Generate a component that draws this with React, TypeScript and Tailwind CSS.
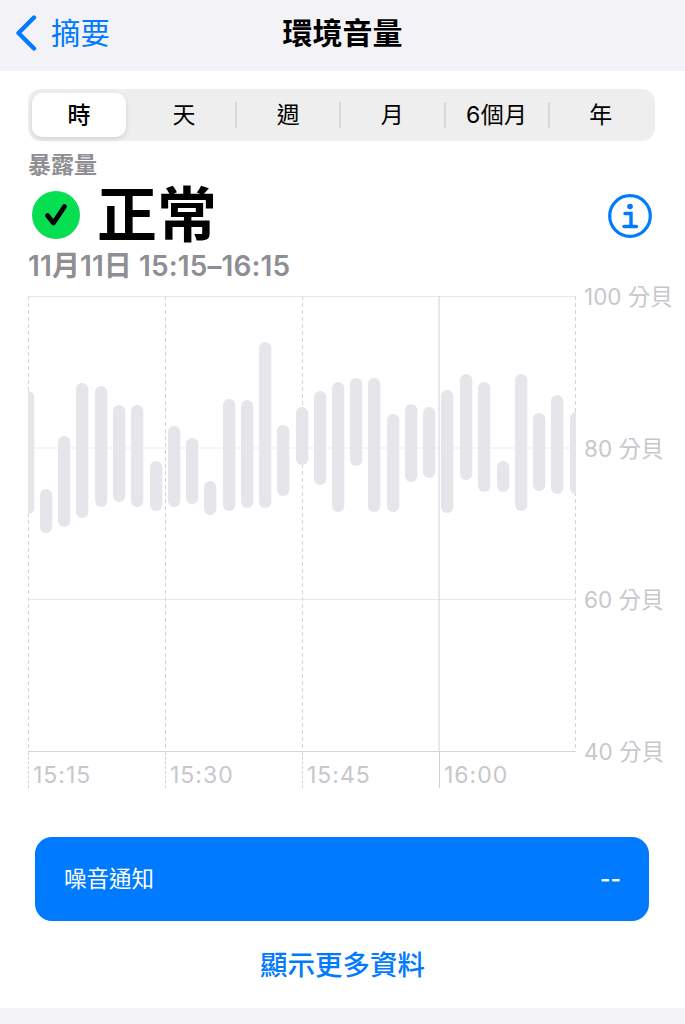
import React from "react";

const FONT = "font-['Inter','Noto_Sans_CJK_TC',sans-serif]";

const TABS = ["時", "天", "週", "月", "6個月", "年"];
const Y_LABELS = ["100 分貝", "80 分貝", "60 分貝", "40 分貝"];
const X_LABELS = ["15:15", "15:30", "15:45", "16:00"];

// [left, top, bottom] in page px
const BARS: number[][] = [
    [22, 391, 514], [40, 489, 533], [58, 436, 527], [76, 383, 518], [95, 386, 507], [113, 405, 502],
    [131, 405, 507], [150, 461, 511], [168, 426, 507], [186, 438, 504], [204, 481, 515], [223, 399, 511],
    [241, 400, 508], [259, 342, 508], [277, 425, 496], [296, 407, 465], [314, 391, 485], [332, 382, 512],
    [350, 378, 466], [368, 378, 512], [387, 414, 512], [405, 404, 482], [423, 407, 478], [441, 390, 513],
    [460, 374, 480], [478, 382, 492], [497, 461, 492], [515, 374, 511], [533, 413, 491], [551, 395, 494],
    [570, 412, 494],
];

function Chart() {
    return (
        <svg width="548" height="456" viewBox="0 0 548 456" className="block">
            <line x1="0" y1="0.5" x2="548" y2="0.5" stroke="#e8e8e8" />
            <line x1="0" y1="152" x2="548" y2="152" stroke="#ececec" />
            <line x1="0" y1="303.5" x2="548" y2="303.5" stroke="#e8e8e8" />
            <line x1="0" y1="455.5" x2="548" y2="455.5" stroke="#d6d6d6" />
            <line x1="0.5" y1="0" x2="0.5" y2="456" stroke="#d4d4d4" strokeDasharray="4 3" />
            <line x1="137.5" y1="0" x2="137.5" y2="456" stroke="#d4d4d4" strokeDasharray="4 3" />
            <line x1="274.5" y1="0" x2="274.5" y2="456" stroke="#d4d4d4" strokeDasharray="4 3" />
            <line x1="411" y1="0" x2="411" y2="456" stroke="#d2d2d2" />
            <line x1="547.5" y1="0" x2="547.5" y2="456" stroke="#d4d4d4" strokeDasharray="4 3" />
            {BARS.map(([left, top, bottom]) => (
                <rect
                    key={left}
                    x={left - 28}
                    y={top - 296}
                    width="12.3"
                    height={bottom - top}
                    rx="6.15"
                    fill="#e5e5ea"
                />
            ))}
        </svg>
    );
}

export default function App() {
    return (
        <div className={`${FONT} w-[685px] h-[1024px] overflow-hidden bg-white flex flex-col`}>
            <header className="h-[71px] shrink-0 bg-[#f2f2f7] relative flex items-center justify-center pb-[6px]">
                <div className="absolute left-[15px] top-[15px] flex items-center gap-[14px] text-[#007aff]">
                    <svg width="22" height="36" viewBox="0 0 22 36" fill="none">
                        <path d="M19 2.5 3.5 18 19 33.5" stroke="#007aff" strokeWidth="4.4" strokeLinecap="round" strokeLinejoin="round" />
                    </svg>
                    <span className="text-[29.5px] leading-[36px]">摘要</span>
                </div>
                <h1 className="text-[30px] leading-[40px] font-semibold text-black">環境音量</h1>
            </header>

            <main className="flex-1 px-[28px] pt-[18px]">
                <div className="h-[52px] w-[627px] rounded-[13px] bg-[#eeeeef] grid grid-cols-6 pr-[2px] items-center">
                    {TABS.map((tab, idx) => (
                        <div key={tab} className="relative h-full flex items-center justify-center">
                            {idx === 0 ? (
                                <div className="ml-[4px] mr-[6px] flex-1 h-[44px] rounded-[10px] bg-white shadow-[0_2px_5px_rgba(0,0,0,0.12)] flex items-center justify-center text-[23px] font-medium text-black">
                                    {tab}
                                </div>
                            ) : (
                                <span className="pt-[1px] text-[23px] tracking-[0.4px] text-black">{tab}</span>
                            )}
                            {idx > 1 && (
                                <span className="absolute left-[-1px] top-[13px] h-[26px] w-[2px] bg-[#d8d8da]" />
                            )}
                        </div>
                    ))}
                </div>

                <div className="mt-[9px] text-[23px] leading-[30px] font-semibold text-[#8e8e93]">暴露量</div>

                <div className="mt-[3px] flex items-center justify-between h-[64px] pl-[4px] pr-[5px]">
                    <div className="flex items-center gap-[17px]">
                        <svg width="48" height="48" viewBox="0 0 48 48">
                            <circle cx="24" cy="24" r="24" fill="#06df52" />
                            <path d="M15.5 24.5 21.5 32 32.5 15.5" fill="none" stroke="#000" strokeWidth="4.8" strokeLinecap="round" strokeLinejoin="round" />
                        </svg>
                        <span className="text-[60px] leading-[64px] font-bold text-black">正常</span>
                    </div>
                    <svg width="44" height="44" viewBox="0 0 44 44" fill="none" className="mt-[2px]">
                        <circle cx="22" cy="22" r="20.3" stroke="#007aff" strokeWidth="3.2" />
                        <circle cx="22" cy="12.5" r="2.8" fill="#007aff" />
                        <path d="M17 19.5h6v13M16 32.5h12.5" stroke="#007aff" strokeWidth="3.4" strokeLinecap="round" />
                    </svg>
                </div>

                <div className="mt-[3px] text-[28px] leading-[32px] font-semibold tracking-[0.1px] text-[#8e8e93]">
                    11月11日 15:15–16:15
                </div>

                <div className="mt-[14px] flex">
                    <div className="w-[548px] shrink-0">
                        <Chart />
                        <div className="grid grid-cols-4 h-[36px]">
                            {X_LABELS.map((label, idx) => (
                                <div
                                    key={label}
                                    className={`h-[36px] overflow-hidden pl-[4px] text-[23px] tracking-[1px] leading-[46px] text-[#c7c7cc] border-l ${idx === 3 ? "border-[#d2d2d2]" : "border-dashed border-[#d4d4d4]"}`}
                                >
                                    {label}
                                </div>
                            ))}
                        </div>
                    </div>
                    <div className="-mt-[13px] ml-[8px] h-[483px] flex flex-col justify-between text-[22.5px] leading-[28px] text-[#c7c7cc] whitespace-nowrap">
                        {Y_LABELS.map(label => (
                            <span key={label}>{label}</span>
                        ))}
                    </div>
                </div>

                <button className="mt-[49px] ml-[7px] w-[614px] h-[84px] rounded-[17px] bg-[#007aff] flex items-center justify-between pl-[29px] pr-[28px] text-white text-[22.5px]">
                    <span>噪音通知</span>
                    <span className="font-semibold">--</span>
                </button>

                <div className="mt-[24px] text-center text-[27.5px] leading-[40px] font-medium text-[#007aff]">
                    顯示更多資料
                </div>
            </main>

            <footer className="h-[16px] shrink-0 bg-[#f2f2f7]" />
        </div>
    );
}
